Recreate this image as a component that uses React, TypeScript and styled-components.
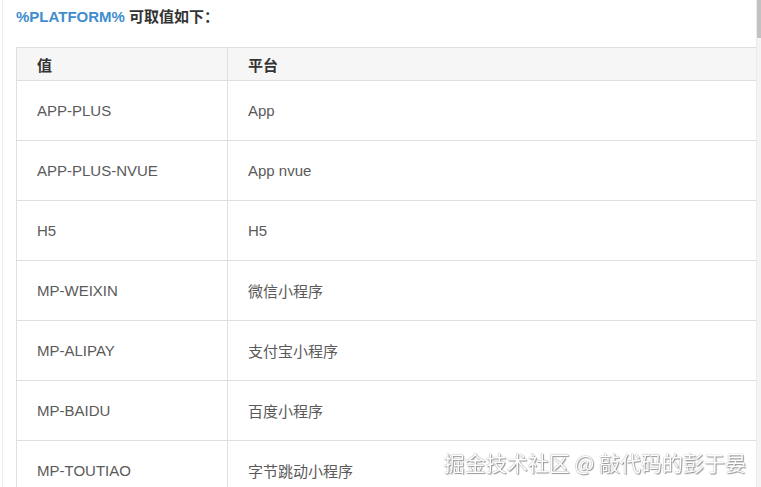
import styled, { createGlobalStyle } from "styled-components";

const GlobalStyle = createGlobalStyle`
  html, body {
    margin: 0;
    padding: 0;
    background: #fff;
    overflow: hidden;
  }
  body {
    font-family: "Liberation Sans", Arial, "Noto Sans CJK SC", sans-serif;
  }
`;

const Page = styled.div`
  position: relative;
  height: 487px;
  margin-left: 2px;
  border-left: 1px solid #ececec;
  padding: 5px 4px 0 13px;
  box-sizing: border-box;
  overflow: hidden;
`;

const Title = styled.p`
  margin: 0 0 19px;
  font-size: 15px;
  line-height: 23px;
  font-weight: bold;
  color: #333;
`;

const Code = styled.span`
  color: #3f8dce;
`;

const Table = styled.table`
  width: 741px;
  border-collapse: collapse;
  font-size: 15px;
  color: #5a5a5a;
`;

const HeadCell = styled.th`
  height: 33px;
  padding: 0 20px;
  box-sizing: border-box;
  text-align: left;
  font-weight: bold;
  color: #333;
  background: #f6f6f6;
  border: 1px solid #dfdfdf;
  width: ${(p: { $w?: number }) => (p.$w ? `${p.$w}px` : "auto")};
`;

const Cell = styled.td`
  height: 60px;
  padding: 0 20px;
  box-sizing: border-box;
  border: 1px solid #dfdfdf;
`;

const Scrollbar = styled.div`
  position: fixed;
  top: 0;
  right: 0;
  width: 4px;
  height: 100%;
  background: #f4f4f4;
  border-left: 1px solid #ececec;
`;

const Thumb = styled.div`
  height: 38px;
  background: #c2c2c2;
`;

const Watermark = styled.div`
  position: fixed;
  right: 15px;
  bottom: 12px;
  font-family: "Noto Sans CJK SC", sans-serif;
  font-size: 21px;
  line-height: 26px;
  color: #fff;
  text-shadow: 0 0 1px #777, 1px 1px 1px #999;
`;

const rows: [string, string][] = [
  ["APP-PLUS", "App"],
  ["APP-PLUS-NVUE", "App nvue"],
  ["H5", "H5"],
  ["MP-WEIXIN", "微信小程序"],
  ["MP-ALIPAY", "支付宝小程序"],
  ["MP-BAIDU", "百度小程序"],
  ["MP-TOUTIAO", "字节跳动小程序"],
];

export default function App() {
  return (
    <>
      <GlobalStyle />
      <Page>
        <Title>
          <Code>%PLATFORM%</Code> 可取值如下：
        </Title>
        <Table>
          <thead>
            <tr>
              <HeadCell $w={211}>值</HeadCell>
              <HeadCell>平台</HeadCell>
            </tr>
          </thead>
          <tbody>
            {rows.map(([value, platform]) => (
              <tr key={value}>
                <Cell>{value}</Cell>
                <Cell>{platform}</Cell>
              </tr>
            ))}
          </tbody>
        </Table>
      </Page>
      <Scrollbar>
        <Thumb />
      </Scrollbar>
      <Watermark>掘金技术社区 @ 敲代码的彭于晏</Watermark>
    </>
  );
}
